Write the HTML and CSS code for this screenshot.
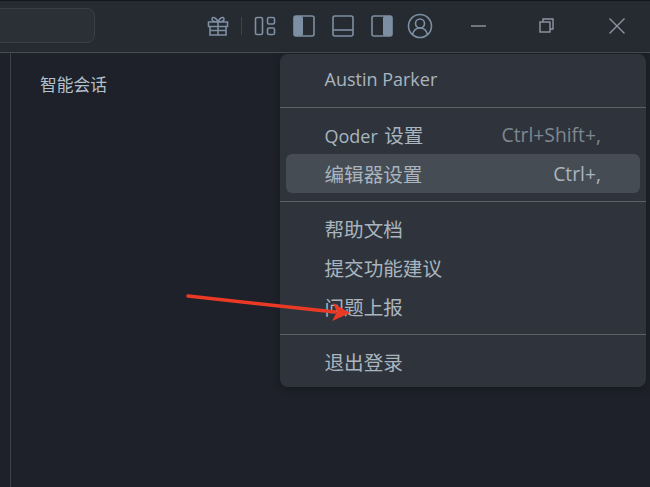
FILE: index.html
```html
<!DOCTYPE html>
<html lang="zh-CN">
<head>
    <meta charset="UTF-8">
    <title>Qoder</title>
    <link rel="stylesheet" href="styles.css">
</head>
<body>
    <div class="window">
        <header class="titlebar">
            <div class="search"></div>
            <div class="tools">
                <svg class="icon gift" width="22" height="22" viewBox="0 0 22 22">
                    <path d="M1.500 7h19v4.500h-19zM3 11.500h16V20H3zM11 7v13M3 15.500h16M11 7C9.500 2.500 5.500 1 5 4c-.3 2 2 3 6 3 4 0 6.300-1 6-3-.5-3-4.500-1.500-6 3z"/>
                </svg>
                <span class="tool-sep"></span>
                <svg class="icon layout" width="22" height="22" viewBox="0 0 22 22">
                    <rect x="1.500" y="2.500" width="7" height="17" rx="1.500"/>
                    <rect x="13.500" y="2.500" width="7" height="6.500" rx="1.500"/>
                    <rect x="13.500" y="13" width="7" height="6.500" rx="1.500"/>
                </svg>
                <svg class="icon panel" width="22" height="22" viewBox="0 0 22 22">
                    <rect class="fill" x="1" y="1" width="9" height="20" rx="2"/>
                    <rect x="1" y="1" width="20" height="20" rx="2"/>
                </svg>
                <svg class="icon panel" width="22" height="22" viewBox="0 0 22 22">
                    <rect x="1" y="1" width="20" height="20" rx="2"/>
                    <path d="M1 15h20"/>
                </svg>
                <svg class="icon panel" width="22" height="22" viewBox="0 0 22 22">
                    <rect class="fill" x="12" y="1" width="9" height="20" rx="2"/>
                    <rect x="1" y="1" width="20" height="20" rx="2"/>
                </svg>
                <svg class="icon account" width="26" height="26" viewBox="0 0 26 26">
                    <circle cx="13" cy="13" r="11.500"/>
                    <circle cx="13" cy="10.500" r="4.500"/>
                    <path d="M5.500 21.500c1-4 4-6.500 7.500-6.500s6.500 2.500 7.500 6.500"/>
                </svg>
            </div>
            <div class="win-controls">
                <svg class="icon win" width="16" height="16" viewBox="0 0 16 16"><path d="M0 8h15"/></svg>
                <svg class="icon win" width="16" height="16" viewBox="0 0 16 16">
                    <rect x="0" y="4" width="10" height="10"/>
                    <path d="M3 4V1h10v10h-3"/>
                </svg>
                <svg class="icon win" width="16" height="16" viewBox="0 0 16 16"><path d="M0.500 0.500l15 15M15.500 0.500l-15 15"/></svg>
            </div>
        </header>
        <div class="content">
            <aside class="rail"></aside>
            <main class="main">
                <div class="section-title">智能会话</div>
            </main>
        </div>
    </div>

    <nav class="menu">
        <div class="menu-row"><span class="latin">Austin Parker</span></div>
        <div class="menu-sep"></div>
        <div class="menu-row"><span><span class="latin brand">Qoder</span> 设置</span><span class="shortcut latin">Ctrl+Shift+,</span></div>
        <div class="menu-row active"><span>编辑器设置</span><span class="shortcut latin">Ctrl+,</span></div>
        <div class="menu-sep"></div>
        <div class="menu-row"><span>帮助文档</span></div>
        <div class="menu-row"><span>提交功能建议</span></div>
        <div class="menu-row"><span>问题上报</span></div>
        <div class="menu-sep"></div>
        <div class="menu-row"><span>退出登录</span></div>
    </nav>

    <!-- red annotation arrow drawn over the screenshot -->
    <svg class="arrow" width="650" height="487" viewBox="0 0 650 487">
        <path class="arrow-line" d="M188 296L335 312"/>
        <path class="arrow-head" d="M333 303L350 313L332 321L337 312z"/>
    </svg>
</body>
</html>
```

FILE: styles.css
```css
* {
    box-sizing: border-box;
}
html, body {
    margin: 0;
    height: 100%;
    overflow: hidden;
}
body {
    font-family: "Noto Sans CJK SC", "Noto Sans", sans-serif;
    background-color: #1e2129;
    color: #a9b4bf;
}
.window {
    height: 487px;
    display: flex;
    flex-direction: column;
}
.titlebar {
    height: 53px;
    display: flex;
    align-items: center;
    padding-bottom: 2px;
    background-color: #262a31;
    border-top: 1px solid #14161a;
    border-bottom: 1px solid #474b52;
}
.search {
    width: 105px;
    height: 35px;
    margin-left: -10px;
    background-color: #2b3037;
    border: 1px solid #3b4047;
    border-radius: 8px;
}
.tools {
    display: flex;
    align-items: center;
    margin-left: 112px;
    gap: 17px;
}
.icon {
    fill: none;
    stroke: #7d8fa3;
    stroke-width: 1.600;
    flex: none;
    overflow: visible;
}
.icon .fill {
    fill: #7d8fa3;
    stroke: none;
}
.tool-sep {
    width: 1px;
    height: 18px;
    margin: 0 -5px;
    background-color: #3f444b;
}
.tools .account {
    margin-left: -3px;
}
.win-controls {
    display: flex;
    align-items: center;
    gap: 53px;
    margin-left: 38px;
}
.icon.win {
    stroke: #8d97a3;
    stroke-width: 1.400;
}
.content {
    flex: 1;
    display: flex;
}
.rail {
    width: 11px;
    border-right: 1px solid #3e424a;
}
.main {
    flex: 1;
    padding: 19px 29px;
}
.section-title {
    font-size: 16.750px;
    line-height: 24px;
    color: #b3c0cc;
}
.menu {
    position: absolute;
    left: 280px;
    top: 54px;
    width: 366px;
    height: 333px;
    padding: 6px 0;
    background-color: #2f343c;
    border-radius: 8px;
    box-shadow: 0 2px 8px rgba(0, 0, 0, 0.25);
    font-size: 19.600px;
}
.menu-row {
    height: 39px;
    margin: 0 6px;
    padding: 0 39px 1px 38.500px;
    display: flex;
    align-items: center;
    justify-content: space-between;
    border-radius: 6px;
    white-space: nowrap;
}
.menu-row.active {
    background-color: #454c54;
}
.latin {
    font-family: "Open Sans", "Noto Sans", sans-serif;
    font-size: 18px;
}
.brand {
    margin-right: 2px;
}
.shortcut {
    font-size: 19.300px;
    color: #7e8791;
}
.active .shortcut {
    color: #a9b4bf;
}
.menu-sep {
    height: 1px;
    margin: 8px 0 7px;
    background-color: #5c6065;
}
.arrow {
    position: absolute;
    left: 0;
    top: 0;
    pointer-events: none;
}
.arrow-line {
    fill: none;
    stroke: #ea3a26;
    stroke-width: 3.500;
    stroke-linecap: round;
}
.arrow-head {
    fill: #ea3a26;
}
```
